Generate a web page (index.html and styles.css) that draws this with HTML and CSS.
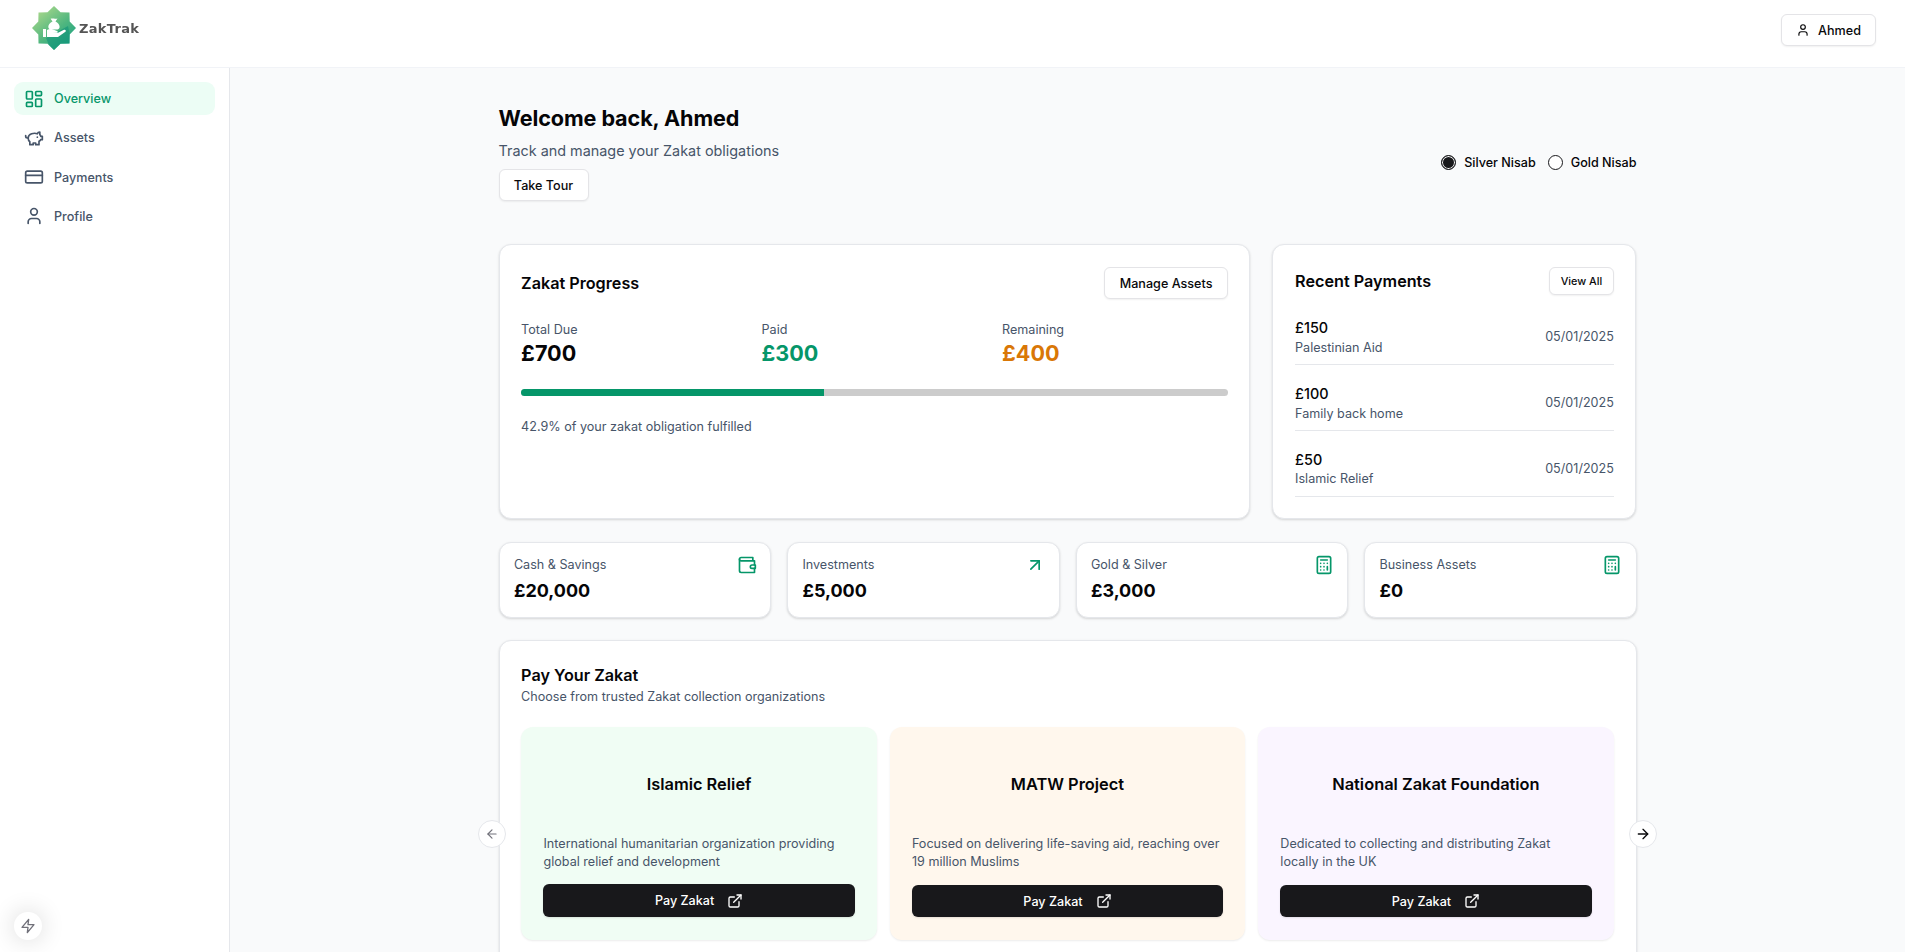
FILE: index.html
```html
<!DOCTYPE html>
<html lang="en">
<head>
<meta charset="utf-8">
<title>ZakTrak</title>
<link rel="stylesheet" href="styles.css">
</head>
<body>
<div class="app">
  <header class="topbar">
    <a class="logo">
      <svg class="logo-mark" viewBox="0 0 44 44" width="44" height="44">
        <defs>
          <linearGradient id="star" x1="0.1" y1="0" x2="0.9" y2="1">
            <stop offset="0" stop-color="#b5dc8c"/>
            <stop offset="0.55" stop-color="#4fb67f"/>
            <stop offset="1" stop-color="#12a084"/>
          </linearGradient>
        </defs>
        <polygon fill="url(#star)" points="22,0 28.5,6.3 37.5,6.5 37.7,15.5 44,22 37.7,28.5 37.5,37.5 28.5,37.7 22,44 15.5,37.7 6.5,37.5 6.3,28.5 0,22 6.3,15.5 6.5,6.5 15.5,6.3"/>
        <polygon fill="#0f8f76" opacity=".55" points="14,32 36,20 37.7,28.5 37.5,37.5 28.5,37.7 22,44 17,39"/>
        <path fill="#fff" d="M22 12.6c-1.2-.3-2.4-.3-3.4.2l1.9 2.6c-2.4 1-4.2 3.2-4.2 5.4 0 1.4.8 2.2 2 2.6h7.4c1.2-.4 1.9-1.2 1.9-2.6 0-2.2-1.8-4.4-4.1-5.4l2-2.8c-1 .2-2.2.3-3.5 0z"/>
        <path fill="#fff" d="M11 23h3v8h-3zM15 24c2-1 4-1.2 6-.4l4 1.3c1.2.4 1 2-.4 1.9l-4-.3 5 .4 6.4-3.1c1.4-.6 2.5 1 1.4 2L26 31H15z"/>
      </svg>
      <span class="logo-text">ZakTrak</span>
    </a>
    <button class="btn user-btn">
      <svg class="ic ic-16" viewBox="0 0 24 24"><path d="M19 21v-2a4 4 0 0 0-4-4H9a4 4 0 0 0-4 4v2"/><circle cx="12" cy="7" r="4"/></svg>
      Ahmed
    </button>
  </header>
  <div class="body-row">
    <aside class="sidebar">
      <nav class="nav">
        <a class="nav-item active">
          <svg class="ic ic-20" viewBox="0 0 24 24"><rect x="3" y="3" width="7" height="9" rx="1"/><rect x="14" y="3" width="7" height="5" rx="1"/><rect x="14" y="12" width="7" height="9" rx="1"/><rect x="3" y="16" width="7" height="5" rx="1"/></svg>
          Overview
        </a>
        <a class="nav-item">
          <svg class="ic ic-20" viewBox="0 0 24 24"><path d="M19 5c-1.5 0-2.8 1.4-3 2-3.5-1.5-11-.3-11 5 0 1.8 0 3 2 4.5V20h4v-2h3v2h4v-4c1-.5 1.7-1 2-2h2v-4h-2c0-1-.5-1.5-1-2V5z"/><path d="M2 9v1c0 1.1.9 2 2 2h1"/><path d="M16 11h.01"/></svg>
          Assets
        </a>
        <a class="nav-item">
          <svg class="ic ic-20" viewBox="0 0 24 24"><rect x="2" y="5" width="20" height="14" rx="2"/><path d="M2 10h20"/></svg>
          Payments
        </a>
        <a class="nav-item">
          <svg class="ic ic-20" viewBox="0 0 24 24"><path d="M19 21v-2a4 4 0 0 0-4-4H9a4 4 0 0 0-4 4v2"/><circle cx="12" cy="7" r="4"/></svg>
          Profile
        </a>
      </nav>
    </aside>
    <main class="main">
      <div class="content">
        <section class="welcome">
          <div class="welcome-left">
            <h1>Welcome back, Ahmed</h1>
            <p class="lead">Track and manage your Zakat obligations</p>
            <button class="btn tour-btn">Take Tour</button>
          </div>
          <div class="nisab">
            <label class="radio-row"><span class="radio checked"></span>Silver Nisab</label>
            <label class="radio-row"><span class="radio"></span>Gold Nisab</label>
          </div>
        </section>

        <section class="top-grid">
          <div class="card progress-card">
            <div class="card-head">
              <h2>Zakat Progress</h2>
              <button class="btn head-btn">Manage Assets</button>
            </div>
            <div class="totals">
              <div><div class="label">Total Due</div><div class="total">£700</div></div>
              <div><div class="label">Paid</div><div class="total green">£300</div></div>
              <div><div class="label">Remaining</div><div class="total orange">£400</div></div>
            </div>
            <div class="bar"><div class="bar-fill" style="width:42.9%"></div></div>
            <p class="note">42.9% of your zakat obligation fulfilled</p>
          </div>
          <div class="card payments-card">
            <div class="card-head compact">
              <h2>Recent Payments</h2>
              <button class="btn small-btn">View All</button>
            </div>
            <div class="pay-row">
              <div><div class="amount">£150</div><div class="label">Palestinian Aid</div></div>
              <div class="label">05/01/2025</div>
            </div>
            <div class="pay-row">
              <div><div class="amount">£100</div><div class="label">Family back home</div></div>
              <div class="label">05/01/2025</div>
            </div>
            <div class="pay-row">
              <div><div class="amount">£50</div><div class="label tight">Islamic Relief</div></div>
              <div class="label">05/01/2025</div>
            </div>
          </div>
        </section>

        <section class="stats">
          <div class="card stat">
            <div><div class="label">Cash &amp; Savings</div><div class="stat-value">£20,000</div></div>
            <svg class="ic ic-20 green" viewBox="0 0 24 24"><path d="M21 12V7H5a2 2 0 0 1 0-4h14v4"/><path d="M3 5v14a2 2 0 0 0 2 2h16v-5"/><path d="M18 12a2 2 0 0 0 0 4h4v-4Z"/></svg>
          </div>
          <div class="card stat">
            <div><div class="label">Investments</div><div class="stat-value">£5,000</div></div>
            <svg class="ic ic-20 green" viewBox="0 0 24 24"><path d="M7 7h10v10"/><path d="M7 17 17 7"/></svg>
          </div>
          <div class="card stat">
            <div><div class="label">Gold &amp; Silver</div><div class="stat-value">£3,000</div></div>
            <svg class="ic ic-20 green" viewBox="0 0 24 24"><rect x="4" y="2" width="16" height="20" rx="2"/><path d="M8 6h8M16 14v4M16 10h.01M12 10h.01M8 10h.01M12 14h.01M8 14h.01M12 18h.01M8 18h.01"/></svg>
          </div>
          <div class="card stat">
            <div><div class="label">Business Assets</div><div class="stat-value">£0</div></div>
            <svg class="ic ic-20 green" viewBox="0 0 24 24"><rect x="4" y="2" width="16" height="20" rx="2"/><path d="M8 6h8M16 14v4M16 10h.01M12 10h.01M8 10h.01M12 14h.01M8 14h.01M12 18h.01M8 18h.01"/></svg>
          </div>
        </section>

        <section class="card pay-card">
          <h2>Pay Your Zakat</h2>
          <p class="label pay-sub">Choose from trusted Zakat collection organizations</p>
          <div class="carousel">
            <button class="arrow arrow-prev">
              <svg class="ic ic-14" viewBox="0 0 24 24"><path d="m12 19-7-7 7-7"/><path d="M19 12H5"/></svg>
            </button>
            <article class="org org-green">
              <h3>Islamic Relief</h3>
              <p class="label org-desc">International humanitarian organization providing global relief and development</p>
              <button class="pay-btn pay-btn-tall">Pay Zakat
                <svg class="ic ic-16" viewBox="0 0 24 24"><path d="M15 3h6v6"/><path d="M10 14 21 3"/><path d="M18 13v6a2 2 0 0 1-2 2H5a2 2 0 0 1-2-2V8a2 2 0 0 1 2-2h6"/></svg>
              </button>
            </article>
            <article class="org org-orange">
              <h3>MATW Project</h3>
              <p class="label org-desc">Focused on delivering life-saving aid, reaching over 19 million Muslims</p>
              <button class="pay-btn">Pay Zakat
                <svg class="ic ic-16" viewBox="0 0 24 24"><path d="M15 3h6v6"/><path d="M10 14 21 3"/><path d="M18 13v6a2 2 0 0 1-2 2H5a2 2 0 0 1-2-2V8a2 2 0 0 1 2-2h6"/></svg>
              </button>
            </article>
            <article class="org org-purple">
              <h3>National Zakat Foundation</h3>
              <p class="label org-desc">Dedicated to collecting and distributing Zakat locally in the UK</p>
              <button class="pay-btn">Pay Zakat
                <svg class="ic ic-16" viewBox="0 0 24 24"><path d="M15 3h6v6"/><path d="M10 14 21 3"/><path d="M18 13v6a2 2 0 0 1-2 2H5a2 2 0 0 1-2-2V8a2 2 0 0 1 2-2h6"/></svg>
              </button>
            </article>
            <button class="arrow arrow-next">
              <svg class="ic ic-16" viewBox="0 0 24 24"><path d="M5 12h14"/><path d="m12 5 7 7-7 7"/></svg>
            </button>
          </div>
        </section>
      </div>
    </main>
  </div>
  <button class="bolt">
    <svg class="ic ic-16" viewBox="0 0 24 24"><path d="M13 2 3 14h9l-1 8 10-12h-9l1-8z"/></svg>
  </button>
</div>
</body>
</html>
```

FILE: styles.css
```css
* { box-sizing: border-box; }
html, body { margin: 0; height: 100%; overflow: hidden; }
body {
  font-family: Inter, "Liberation Sans", sans-serif;
  font-size: 12.6px;
  color: #050507;
  background: #f9fafb;
}
h1, h2, h3, p { margin: 0; }
button { font-family: inherit; cursor: pointer; }

.app { position: relative; height: 952px; display: flex; flex-direction: column; }

.ic { fill: none; stroke: currentColor; stroke-width: 2; stroke-linecap: round; stroke-linejoin: round; flex: none; display: block; }
.ic-14 { width: 14px; height: 14px; }
.ic-16 { width: 16px; height: 16px; }
.ic-20 { width: 20px; height: 20px; }

.topbar {
  height: 68px; flex: none;
  display: flex; align-items: center; justify-content: space-between;
  padding: 0 29px 0 32px;
  background: #fff;
  border-bottom: 1px solid #f1f3f7;
}
.logo { display: flex; align-items: center; gap: 3px; margin-top: -11px; }
.logo-mark { display: block; filter: blur(.4px); }
.logo-text {
  font-family: "DejaVu Sans", sans-serif; font-weight: 700; font-size: 13px;
  letter-spacing: .3px; color: #555; filter: blur(.3px);
}
.btn {
  background: #fff; border: 1px solid #e4e4e7; border-radius: 6px;
  box-shadow: 0 1px 2px rgba(0,0,0,.06);
  font-weight: 500; font-size: 12.6px; color: #09090b; padding: 0;
  display: inline-flex; align-items: center; justify-content: center;
}
.user-btn { width: 95px; height: 32px; gap: 8px; margin-top: -7px; }
.user-btn .ic { width: 14px; height: 14px; }

.body-row { flex: 1; display: flex; min-height: 0; }
.sidebar { width: 230px; flex: none; background: #fff; border-right: 1px solid #e5e7eb; padding: 14px; }
.nav { display: flex; flex-direction: column; gap: 6.3px; width: 201px; }
.nav-item {
  height: 33px; display: flex; align-items: center; gap: 10px;
  padding-left: 10px; border-radius: 9px;
  font-weight: 500; color: #475569;
}
.nav-item.active { background: #ecfdf5; color: #059669; }

.main { flex: 1; min-width: 0; padding-top: 34px; }
.content { width: 1138px; margin: 0 auto; }

.welcome { display: flex; justify-content: space-between; align-items: flex-start; height: 98px; }
h1 { font-size: 21.6px; line-height: 32px; font-weight: 700; letter-spacing: -.1px; }
.lead { font-size: 14.4px; line-height: 24px; color: #475569; margin-top: 5px; }
.tour-btn { width: 90px; height: 32px; margin-top: 6px; }
.nisab { display: flex; gap: 12px; font-weight: 500; margin-top: 53px; }
.radio-row { display: flex; align-items: center; gap: 8px; }
.radio { width: 15px; height: 15px; border-radius: 50%; border: 1px solid #18181b; background: #fff; display: block; }
.radio.checked { background: #18181b; box-shadow: inset 0 0 0 1px #fff; }

.card { background: #fff; border: 1px solid #e5e7eb; border-radius: 12px; box-shadow: 0 1px 3px rgba(0,0,0,.1), 0 1px 2px rgba(0,0,0,.06); }
.top-grid { display: grid; grid-template-columns: 751.6px 364px; grid-template-rows: 275px; gap: 22.4px; margin-top: 44px; }
.progress-card { padding: 22px 21px 22px 21.6px; }
.card-head { display: flex; justify-content: space-between; align-items: center; }
h2 { font-size: 16.2px; font-weight: 600; line-height: 24px; }
.head-btn { width: 124px; height: 32px; }
.totals { display: grid; grid-template-columns: repeat(3, 1fr); gap: 14.4px; margin-top: 22px; }
.label { color: #475569; font-size: 12.6px; line-height: 18px; }
.total { font-size: 21.6px; font-weight: 700; line-height: 28px; }
.green { color: #059669; }
.orange { color: #d97706; }
.bar { height: 7px; border-radius: 4px; background: #ccc; margin-top: 22px; overflow: hidden; }
.bar-fill { height: 100%; background: #059669; }
.note { color: #475569; margin-top: 22px; line-height: 18px; }

.payments-card { padding: 22px 21.6px 0; }
.compact { height: 27px; }
.small-btn { width: 65px; height: 28px; font-size: 10.8px; margin-top: 1px; }
.pay-row {
  height: 66px; padding-top: 10px; display: flex; justify-content: space-between; align-items: center;
  border-bottom: 1px solid #e5e7eb;
}
.compact + .pay-row { margin-top: 5px; }
.amount { font-size: 14.4px; font-weight: 500; line-height: 22px; }
.tight { margin-top: -1px; }

.stats { display: grid; grid-template-columns: repeat(4, 1fr); gap: 16px; margin-top: 23px; }
.stat { height: 76px; display: flex; justify-content: space-between; padding: 13px 13.5px 0 14.4px; }
.stat .ic { margin-top: -1px; }
.stat-value { font-size: 18px; font-weight: 700; line-height: 28px; margin-top: 3px; }

.pay-card { margin-top: 22px; padding: 23px 21.6px 22px; height: 340px; }
.pay-card h2 { line-height: 22px; }
.pay-sub { margin-top: 2px; }
.carousel { position: relative; display: grid; grid-template-columns: repeat(3, 1fr); gap: 12.5px; margin-top: 21px; height: 213px; }
.org {
  border-radius: 12px; padding: 0 22.4px;
  box-shadow: 0 1px 2px rgba(0,0,0,.08);
  display: flex; flex-direction: column;
}
.org-green { background: #f0fdf4; }
.org-orange { background: #fff7ed; }
.org-purple { background: #faf5ff; }
.org h3 { font-size: 16.4px; line-height: 24px; font-weight: 600; text-align: center; margin-top: 45px; }
.org-desc { margin-top: 39px; height: 36px; }
.pay-btn {
  margin-top: 14px; height: 32px; border: 0; border-radius: 6px;
  background: #18181b; color: #fff; font-size: 12.6px; font-weight: 500;
  display: flex; align-items: center; justify-content: center; gap: 13px;
  box-shadow: 0 1px 2px rgba(0,0,0,.1);
}
.pay-btn-tall { margin-top: 13px; height: 33px; }
.arrow {
  position: absolute; top: 93px; width: 28px; height: 28px; padding: 0;
  border: 1px solid #e5e7eb; border-radius: 50%; background: #fff;
  display: flex; align-items: center; justify-content: center; color: #09090b;
}
.arrow-prev { left: -43px; color: #71717a; }
.arrow-next { right: -43px; }

.bolt {
  position: absolute; left: 14px; top: 912px; width: 28px; height: 28px; padding: 0;
  border: 0; border-radius: 50%; background: #fff; color: #71717a;
  display: flex; align-items: center; justify-content: center;
  box-shadow: 0 0 24px rgba(0,0,0,.16);
}
```
